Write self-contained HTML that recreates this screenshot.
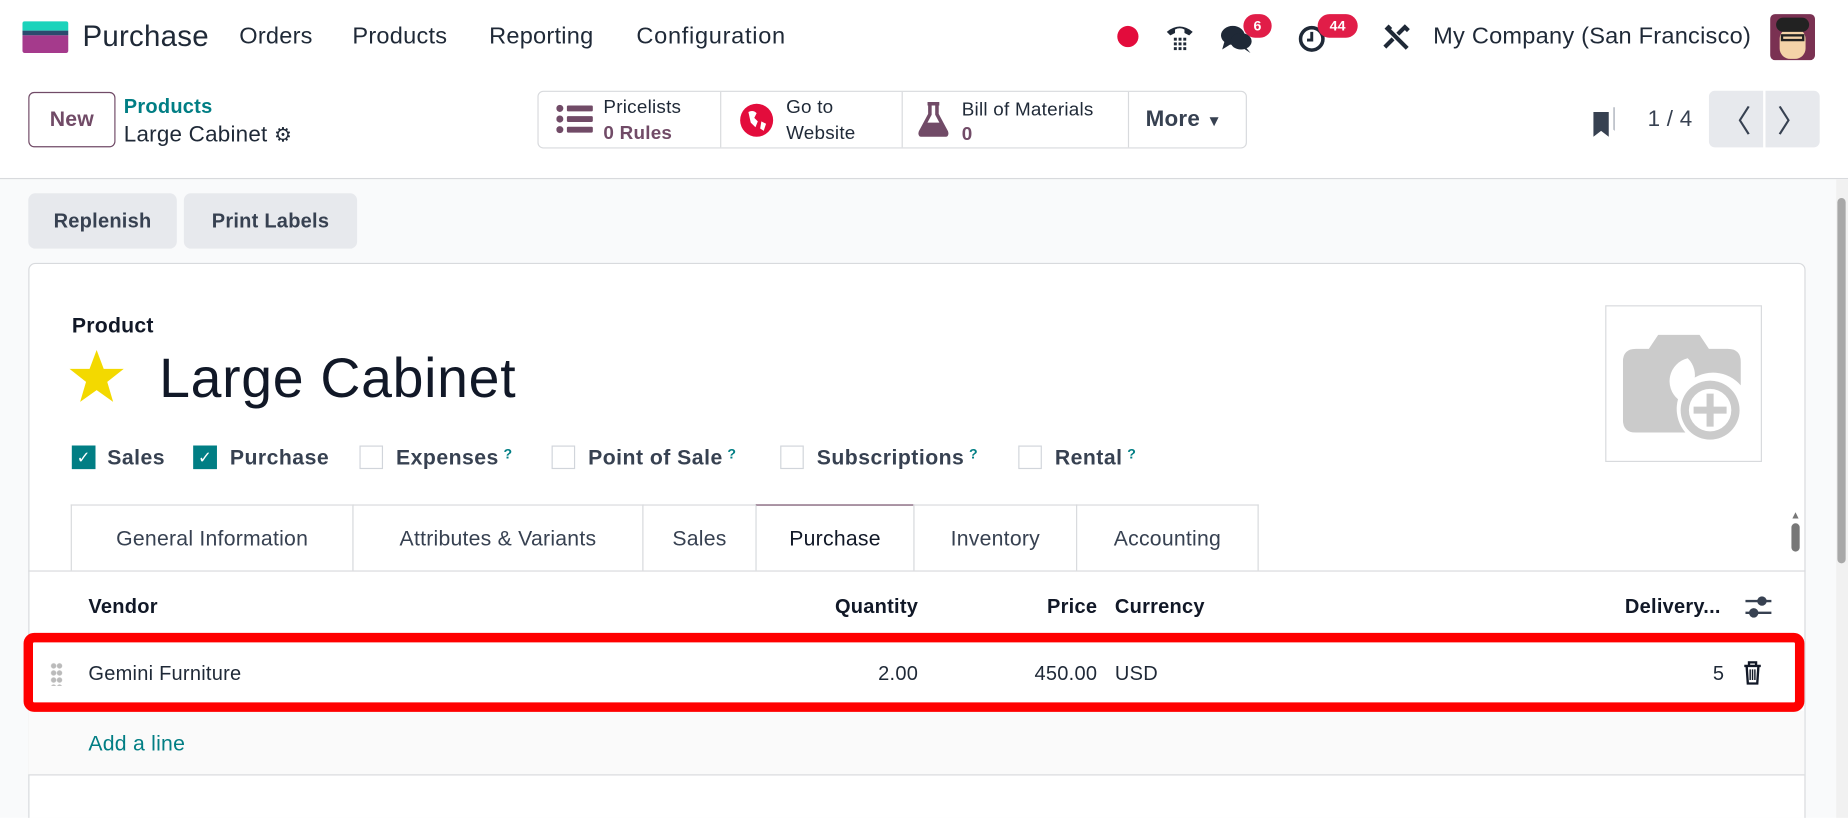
<!DOCTYPE html>
<html><head><meta charset="utf-8"><style>
*{box-sizing:border-box;margin:0;padding:0}
html,body{width:1848px;height:818px;overflow:hidden;background:#fff}
#w{position:absolute;left:0;top:0;width:1568px;height:694px;overflow:hidden;transform:scale(1.17857);transform-origin:0 0;font-family:"Liberation Sans",sans-serif;color:#1f2937;background:#fff;letter-spacing:0.2px}
.a{position:absolute;white-space:nowrap}
.nav{font-size:20px;color:#1f2937;top:20px}
.btn2{background:#e7e9ed;border-radius:6px;font-weight:bold;font-size:17px;color:#374151;display:flex;align-items:center;justify-content:center}
.cb{position:absolute;width:20px;height:20px;border:1px solid #d1d5db;background:#fff;top:378px}
.cb.on{background:#017e84;border-color:#017e84;color:#fff;font-size:14px;text-align:center;line-height:18px}
.cl{position:absolute;top:378px;font-size:18px;font-weight:bold;color:#374151;letter-spacing:0.4px}
.q{color:#017e84;font-size:12px;vertical-align:top;margin-left:4px}
.tab{position:absolute;top:428px;height:56px;border:1px solid #d8dadd;border-bottom:none;font-size:18px;color:#374151;display:flex;align-items:center;justify-content:center;background:#fff;padding-top:2px}
.th{position:absolute;top:505px;font-size:17px;font-weight:bold;color:#111827}
.td{position:absolute;top:562px;font-size:17px;color:#1f2937}
.r{text-align:right}
.badge{position:absolute;background:#e11d48;color:#fff;font-size:12px;font-weight:bold;border-radius:10px;height:20px;line-height:20px;text-align:center}
</style></head><body><div id="w">
<div class="a" style="left:19px;top:18px;width:39px;height:27px;border-radius:2px;overflow:hidden">
<div style="height:8px;background:#1ad3bb"></div><div style="height:4px;background:#2c4a6e"></div><div style="height:15px;background:#a53a8c"></div></div>
<div class="a" style="left:70px;top:17px;font-size:25px;color:#1f2937">Purchase</div>
<div class="a nav" style="left:203px">Orders</div>
<div class="a nav" style="left:299px">Products</div>
<div class="a nav" style="left:415px">Reporting</div>
<div class="a nav" style="left:540px;letter-spacing:0.6px">Configuration</div>
<div class="a" style="left:948px;top:22px;width:18px;height:18px;border-radius:50%;background:#e30c3c"></div>
<svg class="a" style="left:988px;top:18px" width="26" height="26" viewBox="0 0 26 26"><path d="M2 9 Q13 0 24 9 L21 12 L17 10 L17 7 Q13 5 9 7 L9 10 L5 12Z" fill="#1f2937"/><g fill="#1f2937"><rect x="8" y="14" width="2.5" height="2.5"/><rect x="12" y="14" width="2.5" height="2.5"/><rect x="16" y="14" width="2.5" height="2.5"/><rect x="8" y="18" width="2.5" height="2.5"/><rect x="12" y="18" width="2.5" height="2.5"/><rect x="16" y="18" width="2.5" height="2.5"/><rect x="8" y="22" width="2.5" height="2.5"/><rect x="12" y="22" width="2.5" height="2.5"/><rect x="16" y="22" width="2.5" height="2.5"/></g></svg>
<svg class="a" style="left:1035px;top:20px" width="30" height="26" viewBox="0 0 30 26"><ellipse cx="11" cy="10" rx="10" ry="8" fill="#1f2937"/><path d="M4 15 L2 22 L10 17Z" fill="#1f2937"/><ellipse cx="18" cy="15" rx="9" ry="7" fill="#1f2937"/><path d="M22 20 L26 25 L20 21Z" fill="#1f2937"/></svg>
<div class="badge" style="left:1055px;top:12px;width:24px">6</div>
<svg class="a" style="left:1101px;top:20px" width="26" height="26" viewBox="0 0 26 26"><circle cx="12" cy="13" r="9.5" fill="none" stroke="#1f2937" stroke-width="3"/><path d="M12 7v7h-4" stroke="#1f2937" stroke-width="2.5" fill="none"/></svg>
<div class="badge" style="left:1118px;top:12px;width:34px">44</div>
<svg class="a" style="left:1172px;top:19px" width="26" height="26" viewBox="0 0 26 26"><path d="M4 4 L22 22 M3 21 L10 14 M14 10 L20 4 L23 7 M5 3 L8 6" stroke="#1f2937" stroke-width="3.5" fill="none"/></svg>
<div class="a" style="left:1216px;top:20px;font-size:20px">My Company (San Francisco)</div>
<div class="a" style="left:1502px;top:12px;width:38px;height:39px;border-radius:4px;background:#7a3152;overflow:hidden"><div style="position:absolute;left:8px;top:12px;width:22px;height:26px;border-radius:9px;background:#f4d3a8"></div><div style="position:absolute;left:5px;top:3px;width:28px;height:12px;border-radius:6px;background:#222"></div><div style="position:absolute;left:9px;top:17px;width:20px;height:6px;border:2px solid #222"></div></div>
<div class="a" style="left:24px;top:78px;width:74px;height:47px;border:1px solid #714b67;border-radius:5px;color:#714b67;font-size:18px;font-weight:bold;display:flex;align-items:center;justify-content:center">New</div>
<div class="a" style="left:105px;top:81px;font-size:17px;font-weight:bold;color:#017e84">Products</div>
<div class="a" style="left:105px;top:104px;font-size:19px;color:#1f2937">Large Cabinet <span style="font-size:17px">⚙</span></div>
<div class="a" style="left:456px;top:77px;width:602px;height:49px;border:1px solid #d8dadd;border-radius:5px"></div>
<div class="a" style="left:611px;top:78px;width:1px;height:47px;background:#d8dadd"></div>
<div class="a" style="left:765px;top:78px;width:1px;height:47px;background:#d8dadd"></div>
<div class="a" style="left:957px;top:78px;width:1px;height:47px;background:#d8dadd"></div>
<svg class="a" style="left:472px;top:88px" width="32" height="26" viewBox="0 0 32 26"><g fill="#714b67"><circle cx="3" cy="4" r="3"/><circle cx="3" cy="13" r="3"/><circle cx="3" cy="22" r="3"/><rect x="9" y="1.5" width="22" height="5" rx="1"/><rect x="9" y="10.5" width="22" height="5" rx="1"/><rect x="9" y="19.5" width="22" height="5" rx="1"/></g></svg>
<div class="a" style="left:512px;top:81px;font-size:16px;line-height:22px">Pricelists<br><b style="color:#714b67">0&nbsp;Rules</b></div>
<svg class="a" style="left:627px;top:87px" width="30" height="30" viewBox="0 0 30 30"><circle cx="15" cy="15" r="14" fill="#e30c3c"/><path d="M8 8 Q12 6 15 9 L13 13 L16 16 L14 21 L10 17 Z M19 16 L23 18 L21 24 L18 22Z" fill="#fff"/></svg>
<div class="a" style="left:667px;top:81px;font-size:16px;line-height:22px">Go to<br>Website</div>
<svg class="a" style="left:778px;top:86px" width="28" height="30" viewBox="0 0 28 30"><path d="M9 2h10M11 2v9L3 26q-1 3 2 3h18q3 0 2-3L17 11V2" stroke="#714b67" stroke-width="3" fill="none"/><path d="M7 18h14l4 8q0 2-2 2H5q-2 0-1-2Z" fill="#714b67"/></svg>
<div class="a" style="left:816px;top:83px;font-size:16px;line-height:21px">Bill of Materials<br><b style="color:#714b67">0</b></div>
<div class="a" style="left:972px;top:91px;font-size:19px;font-weight:bold;color:#374151">More <span style="font-size:13px">▼</span></div>
<svg class="a" style="left:1350px;top:89px" width="24" height="28" viewBox="0 0 24 28"><path d="M9 2h11v20l-1-1V2Z" fill="#9ca3af"/><path d="M2 6h13v21l-6.5-5L2 27Z" fill="#374151"/></svg>
<div class="a" style="left:1398px;top:91px;font-size:19px;color:#374151">1 / 4</div>
<div class="a btn2" style="left:1450px;top:77px;width:46px;height:48px;border-radius:5px 0 0 5px;font-weight:normal;font-size:26px">〈</div>
<div class="a btn2" style="left:1498px;top:77px;width:46px;height:48px;border-radius:0 5px 5px 0;font-weight:normal;font-size:26px">〉</div>
<div class="a" style="left:0;top:151px;width:1568px;height:543px;background:#f9fafb;border-top:1px solid #d8dadd"></div>
<div class="a" style="left:1558px;top:152px;width:10px;height:542px;background:#f1f1f1"></div>
<div class="a" style="left:1559px;top:168px;width:7px;height:310px;background:#a8a8a8;border-radius:4px"></div>
<div class="a btn2" style="left:24px;top:164px;width:126px;height:47px">Replenish</div>
<div class="a btn2" style="left:156px;top:164px;width:147px;height:47px">Print Labels</div>
<div class="a" style="left:24px;top:223px;width:1508px;height:490px;background:#fff;border:1px solid #d8dadd;border-radius:6px"></div>
<div class="a" style="left:61px;top:266px;font-size:18px;font-weight:bold;color:#111827">Product</div>
<svg class="a" style="left:58px;top:296px" width="48" height="46" viewBox="0 0 48 46"><path d="M24 1 L30 17 L47 17 L33 28 L38 45 L24 35 L10 45 L15 28 L1 17 L18 17Z" fill="#f3d900"/></svg>
<div class="a" style="left:135px;top:293px;font-size:47px;color:#111827;letter-spacing:0.6px">Large Cabinet</div>
<div class="cb on" style="left:61px">✓</div><div class="cl" style="left:91px">Sales</div>
<div class="cb on" style="left:164px">✓</div><div class="cl" style="left:195px">Purchase</div>
<div class="cb" style="left:305px"></div><div class="cl" style="left:336px">Expenses<span class="q">?</span></div>
<div class="cb" style="left:468px"></div><div class="cl" style="left:499px">Point of Sale<span class="q">?</span></div>
<div class="cb" style="left:662px"></div><div class="cl" style="left:693px">Subscriptions<span class="q">?</span></div>
<div class="cb" style="left:864px"></div><div class="cl" style="left:895px">Rental<span class="q">?</span></div>
<div class="a" style="left:1362px;top:259px;width:133px;height:133px;border:1px solid #d8dadd;background:#fff"></div>
<svg class="a" style="left:1377px;top:284px" width="105" height="92" viewBox="0 0 105 92"><path d="M30 0h35l8 12h16q11 0 11 11v20a28 28 0 0 0-47 40H11Q0 83 0 72V23q0-11 11-11h11Z" fill="#cbcbcb"/><path d="M55 20a20 20 0 0 0-8 35a30 30 0 0 1 13-14a20 20 0 0 0-5-21Z" fill="#fff"/><circle cx="74" cy="64" r="25" fill="#cbcbcb"/><circle cx="74" cy="64" r="18" fill="#fff"/><path d="M74 50v28M60 64h28" stroke="#cbcbcb" stroke-width="6"/></svg>
<div class="tab" style="left:60px;width:240px">General Information</div>
<div class="tab" style="left:299px;width:247px">Attributes &amp; Variants</div>
<div class="tab" style="left:545px;width:97px">Sales</div>
<div class="tab" style="left:641px;width:135px;border-top:1px solid #714b67;color:#111827">Purchase</div>
<div class="tab" style="left:775px;width:139px">Inventory</div>
<div class="tab" style="left:913px;width:155px">Accounting</div>
<div class="a" style="left:24px;top:484px;width:1508px;height:1px;background:#d8dadd"></div>
<div class="a" style="left:1519px;top:432px;font-size:9px;color:#777">▲</div>
<div class="a" style="left:1520px;top:444px;width:7px;height:24px;background:#777;border-radius:4px"></div>
<div class="th" style="left:75px">Vendor</div>
<div class="th r" style="left:600px;width:179px">Quantity</div>
<div class="th r" style="left:800px;width:131px">Price</div>
<div class="th" style="left:946px">Currency</div>
<div class="th r" style="left:1300px;width:160px">Delivery...</div>
<svg class="a" style="left:1480px;top:504px" width="24" height="22" viewBox="0 0 24 22"><path d="M1 6h22M1 16h22" stroke="#374151" stroke-width="2"/><circle cx="15" cy="6" r="4" fill="#374151"/><circle cx="8" cy="16" r="4" fill="#374151"/></svg>
<div class="a" style="left:24px;top:603px;width:1507px;height:55px;background:#fafafa;border-bottom:1px solid #d8dadd"></div>
<div class="a" style="left:20px;top:537px;width:1511px;height:67px;border:8px solid #ff0000;border-radius:9px;background:#fff"></div>
<div class="a" style="left:43px;top:562px;width:10px;height:20px;background:radial-gradient(circle,#bbb 2px,transparent 2.5px) 0 0/5px 6px"></div>
<div class="td" style="left:75px">Gemini Furniture</div>
<div class="td r" style="left:680px;width:99px">2.00</div>
<div class="td r" style="left:830px;width:101px">450.00</div>
<div class="td" style="left:946px">USD</div>
<div class="td r" style="left:1400px;width:63px">5</div>
<svg class="a" style="left:1479px;top:561px" width="16" height="20" viewBox="0 0 16 20"><path d="M1 4h14M5 4V1h6v3M3 4l1 15h8l1-15" stroke="#111827" stroke-width="2" fill="none"/><path d="M6 7v9M8 7v9M10 7v9" stroke="#111827" stroke-width="1.2"/></svg>
<div class="a" style="left:75px;top:621px;font-size:18px;color:#017e84">Add a line</div>
</div></body></html>
